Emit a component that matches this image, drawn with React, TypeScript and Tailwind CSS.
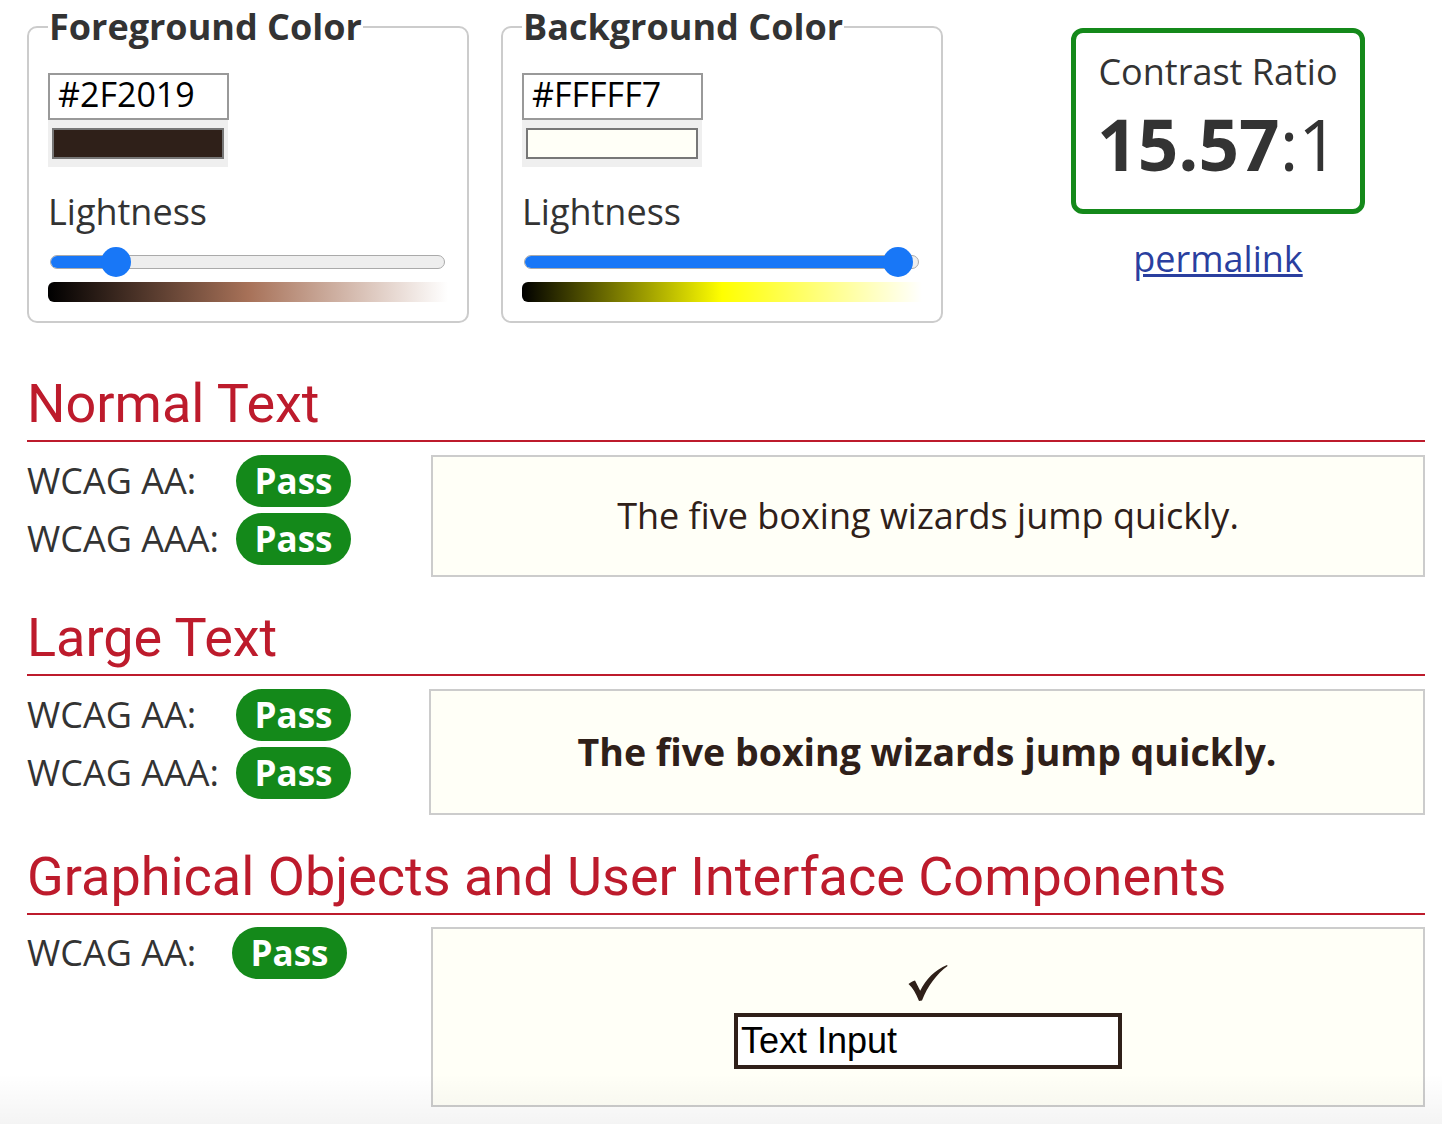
import React from "react";

const FG = "#2F2019";

const LightnessSlider = ({ lightness, gradient }: { lightness: number; gradient: string }) => {
  // thumb centre moves between 15px and (track width - 15px)
  const pos = 15 + lightness * (395 - 30);
  return (
    <div>
      <div className="relative ml-[2px] flex h-[30px] w-[395px] items-center">
        <div className="relative h-[14px] w-full overflow-hidden rounded-full border border-[#aaa] bg-[#eee]">
          <div className="absolute inset-y-0 left-0 bg-[#1877f7]" style={{ width: pos }} />
        </div>
        <div
          className="absolute top-0 -ml-[15px] h-[30px] w-[30px] rounded-full bg-[#1877f7]"
          style={{ left: pos }}
        />
      </div>
      <div className={`mt-[5px] h-[20px] w-[400px] rounded-l-[6px] ${gradient}`} />
    </div>
  );
};

const ColorPicker = ({
  title,
  hex,
  lightness,
  swatch,
  gradient,
}: {
  title: string;
  hex: string;
  lightness: number;
  swatch: string;
  gradient: string;
}) => {
  return (
    <fieldset className="w-[442px] rounded-[10px] border-2 border-[#ccc] px-[19px] pb-[19px]">
      <legend className="px-px text-[36px] font-bold leading-[46px] text-[#333]">{title}</legend>
      <input
        readOnly
        value={hex}
        className="mt-[23px] block h-[47px] w-[181px] border-2 border-[#999] bg-white px-[8px] pb-[4px] text-[34px] text-black outline-none"
      />
      <div className="h-[47px] w-[180px] bg-[#efefef] px-[4px] py-[8px]">
        <div className={`h-full w-full border-2 border-[#777] ${swatch}`} />
      </div>
      <div className="mt-[21px] text-[36px] leading-[48px] text-[#333]">Lightness</div>
      <div className="mt-[11px]">
        <LightnessSlider lightness={lightness} gradient={gradient} />
      </div>
    </fieldset>
  );
};

const Pass = () => (
  <span className="flex h-[52px] w-[115px] items-center justify-center rounded-full bg-[#14891a] text-[35px] font-bold text-white">
    Pass
  </span>
);

const Result = ({ label, labelWidth }: { label: string; labelWidth: string }) => (
  <div className="flex items-center">
    <span className={`${labelWidth} text-[36px] leading-[52px] text-[#333]`}>{label}</span>
    <Pass />
  </div>
);

const SectionTitle = ({ children, className }: { children: React.ReactNode; className: string }) => (
  <h2
    className={`border-b-2 border-[#bd1b2c] pb-[6px] font-['Roboto',sans-serif] text-[54px] font-normal leading-[61px] text-[#bd1b2c] ${className}`}
  >
    {children}
  </h2>
);

const CheckMark = () => (
  <svg width="40" height="36" viewBox="0 0 40 36" fill={FG}>
    <path d="M0.5 19 C3 17.2 5 16.2 7 15.5 L12.2 25.8 C18 14 27 5 39 0 L39.6 1 C29 8.5 19.5 21 14 35.5 L11 36 C7.8 28 4.5 22.5 0.5 19 Z" />
  </svg>
);

export default function App() {
  return (
    <div className="relative h-[1124px] overflow-hidden bg-white pl-[27px] pr-[17px] pt-[4px] font-['Open_Sans',sans-serif]">
      <div className="flex items-start">
        <ColorPicker
          title="Foreground Color"
          hex="#2F2019"
          lightness={0.141}
          swatch="bg-[#2F2019]"
          gradient="bg-[linear-gradient(to_right,#000,hsl(19_31%_50%),#fff)]"
        />
        <div className="ml-[32px]">
          <ColorPicker
            title="Background Color"
            hex="#FFFFF7"
            lightness={0.984}
            swatch="bg-[#FFFFF7]"
            gradient="bg-[linear-gradient(to_right,#000,hsl(60_100%_50%),#fff)]"
          />
        </div>
        <div className="ml-[128px] mt-[24px] flex w-[294px] flex-col items-center">
          <div className="flex h-[186px] w-full flex-col items-center rounded-[12px] border-[5px] border-[#14891a] pt-[15px] text-[#333]">
            <div className="text-[36px] leading-[48px]">Contrast Ratio</div>
            <div className="mt-[12px] text-[71px] leading-none">
              <b>15.57</b>:1
            </div>
          </div>
          <a href="#" className="mt-[21px] text-[36px] leading-[48px] text-[#2a3f9f] underline">
            permalink
          </a>
        </div>
      </div>

      <SectionTitle className="mt-[50px]">Normal Text</SectionTitle>
      <div className="mt-[13px] grid grid-cols-[404px_1fr]">
        <div className="flex flex-col gap-[6px]">
          <Result label="WCAG AA:" labelWidth="w-[209px]" />
          <Result label="WCAG AAA:" labelWidth="w-[209px]" />
        </div>
        <div className="flex h-[122px] items-center justify-center border-2 border-[#ccc] bg-[#FFFFF7] text-[36px] text-[#2F2019]">
          The five boxing wizards jump quickly.
        </div>
      </div>

      <SectionTitle className="mt-[30px]">Large Text</SectionTitle>
      <div className="mt-[13px] grid grid-cols-[402px_1fr]">
        <div className="flex flex-col gap-[6px]">
          <Result label="WCAG AA:" labelWidth="w-[209px]" />
          <Result label="WCAG AAA:" labelWidth="w-[209px]" />
        </div>
        <div className="flex h-[126px] items-center justify-center border-2 border-[#ccc] bg-[#FFFFF7] text-[37.5px] font-bold text-[#2F2019]">
          The five boxing wizards jump quickly.
        </div>
      </div>

      <SectionTitle className="mt-[31px]">Graphical Objects and User Interface Components</SectionTitle>
      <div className="mt-[12px] grid grid-cols-[404px_1fr]">
        <div className="flex flex-col">
          <Result label="WCAG AA:" labelWidth="w-[205px]" />
        </div>
        <div className="flex h-[180px] flex-col items-center justify-center gap-[12px] border-2 border-[#ccc] bg-[#FFFFF7]">
          <CheckMark />
          <input
            readOnly
            value="Text Input"
            className="h-[56px] w-[388px] border-4 border-[#2F2019] bg-white pl-[3px] font-['Liberation_Sans',sans-serif] text-[36px] text-black outline-none"
          />
        </div>
      </div>

      <div className="pointer-events-none absolute inset-x-0 bottom-0 h-[50px] bg-[linear-gradient(to_bottom,transparent,rgba(0,0,0,0.045))]" />
    </div>
  );
}
